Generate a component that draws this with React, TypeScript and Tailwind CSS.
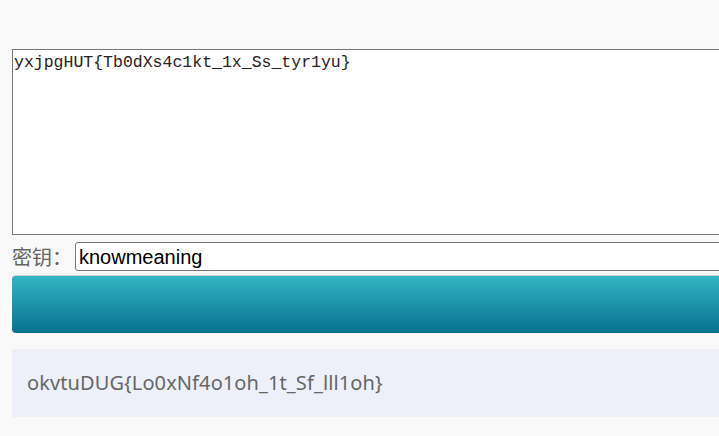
export default function App() {
  return (
    <div className="h-[436px] w-[719px] overflow-hidden bg-[#f9f9f9] pt-[49px] pl-[12px]">
      <div className="w-[760px]">
        {/* Cipher text */}
        <textarea
          readOnly
          defaultValue="yxjpgHUT{Tb0dXs4c1kt_1x_Ss_tyr1yu}"
          className="block h-[186px] w-full resize-none border border-[#767676] bg-white px-[1px] py-[3px] font-['Liberation_Mono',monospace] text-[16.5px] leading-[20px] text-[#2a2222] outline-none"
        />

        {/* Key row */}
        <div className="mt-[7px] flex items-center gap-[3px]">
          <span className="font-['Noto_Sans_CJK_SC',sans-serif] text-[20px] leading-[29px] text-[#666]">
            密钥：
          </span>
          <input
            readOnly
            defaultValue="knowmeaning"
            className="h-[29px] flex-1 rounded-[3px] border border-[#767676] bg-white px-[3px] font-['Liberation_Sans',sans-serif] text-[20px] text-black outline-none"
          />
        </div>

        {/* Decrypt button */}
        <button className="mt-[4px] block h-[58px] w-full rounded-[4px] border-t border-[#d4d4d4] bg-gradient-to-b from-[#31b5c4] to-[#05728f]" />

        {/* Result */}
        <div className="mt-[16px] flex h-[68px] items-center bg-[#edf0f8] px-[15px] font-['Noto_Sans',sans-serif] text-[20px] tracking-[0.1px] text-[#666]">
          okvtuDUG{"{"}Lo0xNf4o1oh_1t_Sf_lll1oh{"}"}
        </div>
      </div>
    </div>
  );
}
